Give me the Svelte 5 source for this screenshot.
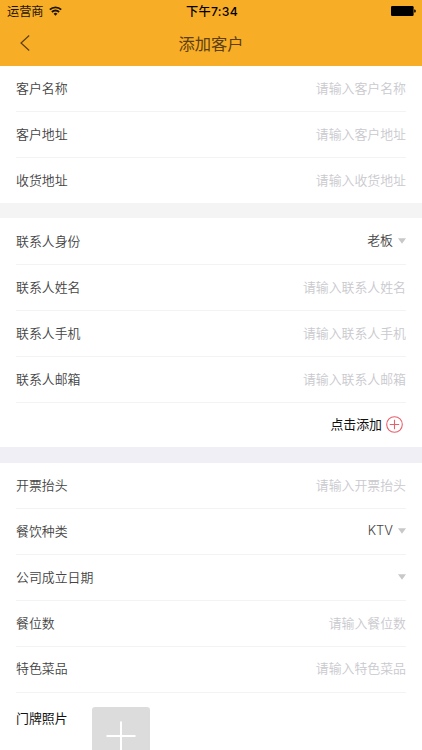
<script lang="ts">
  type Field = {
    key: string;
    label: string;
    type: 'input' | 'select';
  };

  let form: Record<string, string> = $state({
    name: '',
    address: '',
    shipping: '',
    role: '老板',
    contactName: '',
    contactPhone: '',
    contactEmail: '',
    invoice: '',
    category: 'KTV',
    founded: '',
    seats: '',
    dishes: '',
  });

  const customerFields: Field[] = [
    { key: 'name', label: '客户名称', type: 'input' },
    { key: 'address', label: '客户地址', type: 'input' },
    { key: 'shipping', label: '收货地址', type: 'input' },
  ];

  const contactFields: Field[] = [
    { key: 'role', label: '联系人身份', type: 'select' },
    { key: 'contactName', label: '联系人姓名', type: 'input' },
    { key: 'contactPhone', label: '联系人手机', type: 'input' },
    { key: 'contactEmail', label: '联系人邮箱', type: 'input' },
  ];

  const companyFields: Field[] = [
    { key: 'invoice', label: '开票抬头', type: 'input' },
    { key: 'category', label: '餐饮种类', type: 'select' },
    { key: 'founded', label: '公司成立日期', type: 'select' },
    { key: 'seats', label: '餐位数', type: 'input' },
    { key: 'dishes', label: '特色菜品', type: 'input' },
  ];
</script>

{#snippet row(field: Field)}
  <div class="row">
    <label class="label" for={field.key}>{field.label}</label>
    {#if field.type === 'input'}
      <input
        id={field.key}
        class="input"
        type="text"
        placeholder={`请输入${field.label}`}
        bind:value={form[field.key]}
      />
    {:else}
      <button id={field.key} class="select" type="button">
        <span>{form[field.key]}</span>
        <svg class="arrow" width="8" height="6" viewBox="0 0 8 6">
          <path d="M0 0.3h8L4 5.7z" fill="#c8c8c8" />
        </svg>
      </button>
    {/if}
  </div>
{/snippet}

<div class="page">
  <header class="header">
    <div class="status">
      <div class="carrier">
        <span>运营商</span>
        <svg width="13" height="10" viewBox="0 0 13 10" fill="none" stroke="#1d1403" stroke-width="1.8">
          <path d="M0.8 3.7a8.1 8.1 0 0 1 11.4 0" />
          <path d="M2.9 6a5.1 5.1 0 0 1 7.2 0" />
          <path d="M6.5 9.8L4.6 7.8a2.7 2.7 0 0 1 3.8 0z" fill="#1d1403" stroke="none" />
        </svg>
      </div>
      <span class="time">下午7:34</span>
      <svg class="battery" width="25" height="10" viewBox="0 0 25 10">
        <rect width="22.6" height="10" rx="1.2" />
        <path d="M23.2 3.4h0.6q1 0 1 1.6t-1 1.6h-0.6z" />
      </svg>
    </div>
    <div class="nav">
      <button class="back" type="button" aria-label="返回">
        <svg width="10" height="16" viewBox="0 0 10 16" fill="none" stroke="#5c4010" stroke-width="1.2">
          <path d="M9.2 0.5L1 8l8.2 7.5" />
        </svg>
      </button>
      <h1>添加客户</h1>
    </div>
  </header>

  <section class="group">
    {#each customerFields as field}
      {@render row(field)}
    {/each}
  </section>

  <section class="group contact">
    {#each contactFields as field}
      {@render row(field)}
    {/each}
    <div class="row add-row">
      <button class="add" type="button">
        <span>点击添加</span>
        <svg width="17" height="17" viewBox="0 0 17 17" fill="none" stroke="#e8606c">
          <circle cx="8.5" cy="8.5" r="7.8" stroke-width="1.1" />
          <path d="M8.5 3.8v9.4M3.8 8.5h9.4" stroke-width="1.1" />
        </svg>
      </button>
    </div>
  </section>

  <section class="group company">
    {#each companyFields as field}
      {@render row(field)}
    {/each}
    <div class="photo">
      <span class="photo-label">门牌照片</span>
      <button class="upload" type="button" aria-label="上传照片">
        <svg width="30" height="30" viewBox="0 0 30 30" stroke="#fff" stroke-width="2">
          <path d="M15 0.5v29M0.5 15h29" />
        </svg>
      </button>
    </div>
  </section>
</div>

<style>
  :global(body) {
    margin: 0;
    overflow: hidden;
  }

  .page {
    height: 750px;
    overflow: hidden;
    background: #fff;
    color: #444;
    font-family: 'Noto Sans CJK SC', sans-serif;
    font-size: 12.9px;
    line-height: 20px;
  }

  button,
  input {
    padding: 0;
    border: 0;
    background: none;
    color: inherit;
    font: inherit;
  }

  .header {
    height: 65.6px;
    background: #f8ad27;
  }

  .status {
    display: grid;
    grid-template-columns: 1fr auto 1fr;
    align-items: center;
    height: 21px;
    padding: 0 6px 0 7px;
    color: #1d1403;
    font-size: 12.2px;
  }

  .carrier {
    display: flex;
    align-items: center;
    gap: 5px;
  }

  .time {
    padding: 2px 0 0 1px;
    color: #000;
    font-family: Inter, 'Noto Sans CJK SC', sans-serif;
    font-weight: 500;
    letter-spacing: 0.3px;
  }

  .battery {
    justify-self: end;
  }

  .nav {
    display: grid;
    grid-template-columns: 1fr auto 1fr;
    align-items: center;
    height: 43px;
  }

  .back {
    display: flex;
    padding-left: 20px;
  }

  h1 {
    margin: 0;
    color: #5c4010;
    font-size: 16.3px;
    font-weight: 400;
  }

  .group {
    padding: 0 16px;
  }

  .contact {
    padding-top: 0.5px;
    border-top: 15px solid #f4f4f4;
  }

  .company {
    border-top: 16px solid #efeff5;
  }

  .row {
    display: flex;
    align-items: center;
    justify-content: space-between;
    box-sizing: border-box;
    height: 45.8px;
    padding-bottom: 1.4px;
    border-top: 1px solid #f3f3f3;
  }

  .group .row:first-child {
    border-top-color: transparent;
  }

  .group .add-row {
    height: 44.9px;
    padding-bottom: 0.6px;
  }

  .label,
  .input,
  .select {
    font-weight: 350;
  }

  .input {
    flex: 1;
    min-width: 0;
    height: 20px;
    outline: none;
    text-align: right;
  }

  .input::placeholder {
    color: #c9c9ce;
    opacity: 1;
  }

  .select {
    display: flex;
    align-items: center;
    gap: 5px;
    font-family: Inter, 'Noto Sans CJK SC', sans-serif;
  }

  .add {
    display: flex;
    align-items: center;
    gap: 4px;
    margin-left: auto;
    padding-right: 3px;
    color: #111;
  }

  .photo {
    display: flex;
    gap: 24px;
    padding-top: 14px;
    border-top: 1px solid #f3f3f3;
  }

  .photo-label {
    padding-top: 1px;
    color: #111;
  }

  .upload {
    display: flex;
    align-items: center;
    justify-content: center;
    width: 58px;
    height: 58px;
    border-radius: 3px;
    background: #dcdcdc;
  }
</style>
